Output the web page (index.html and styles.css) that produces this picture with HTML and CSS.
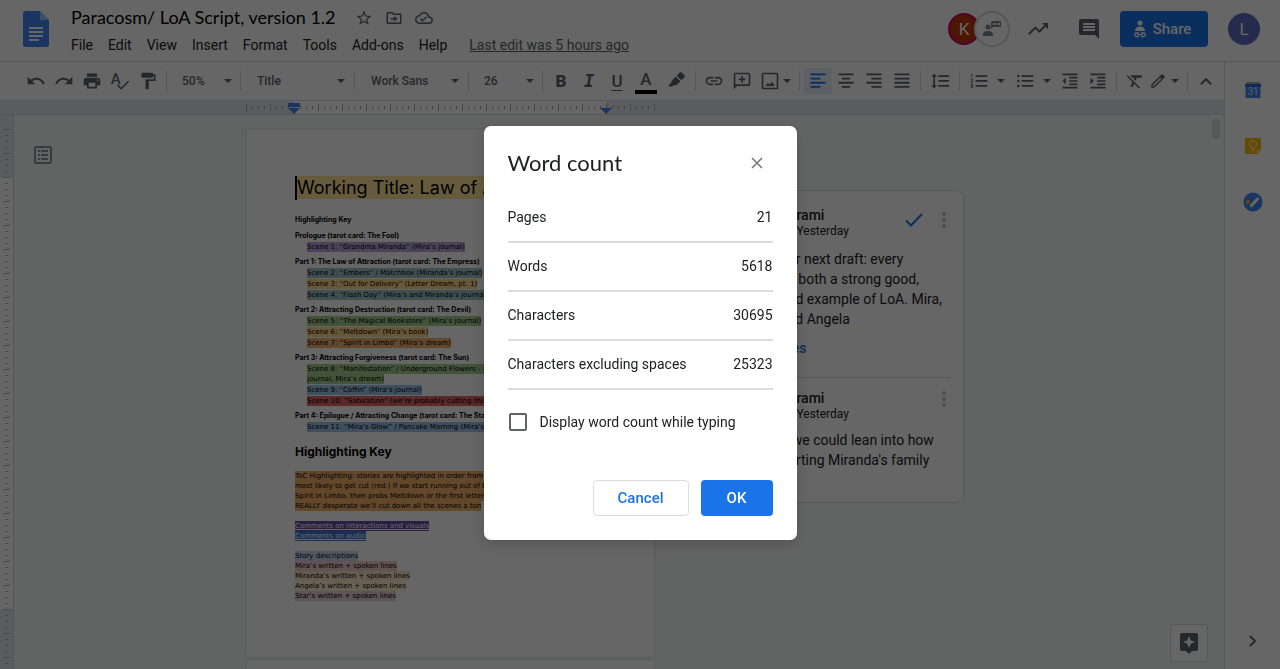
FILE: index.html
```html
<!DOCTYPE html>
<html lang="en">
<head>
    <meta charset="UTF-8">
    <meta name="viewport" content="width=device-width, initial-scale=1.0">
    <title>Paracosm/ LoA Script, version 1.2</title>
    <link rel="stylesheet" href="styles.css">
</head>
<body>
    <!-- Shared icons -->
    <svg class="sprite" aria-hidden="true">
        <symbol id="caret" viewBox="0 0 8 4"><path d="M0 0h8L4 4z"/></symbol>
        <symbol id="more" viewBox="0 0 4 16"><circle cx="2" cy="2" r="2"/><circle cx="2" cy="8" r="2"/><circle cx="2" cy="14" r="2"/></symbol>
    </svg>

    <header class="header">
        <svg class="logo" viewBox="0 0 26 36">
            <path fill="#4285f4" d="M2.500 0H17l9 9v24.500a2.500 2.500 0 0 1-2.500 2.500h-21A2.500 2.500 0 0 1 0 33.500v-31A2.500 2.500 0 0 1 2.500 0z"/>
            <path fill="#a1c2fa" d="M17 0l9 9h-9z"/>
            <path fill="#fff" d="M6 16h14v2H6zm0 4h14v2H6zm0 4h14v2H6zm0 4h10v2H6z"/>
        </svg>
        <div class="doc-info">
            <div class="title-row">
                <h1 class="doc-title">Paracosm/ LoA Script, version 1.2</h1>
                <button class="title-button" aria-label="Star"><svg viewBox="0 0 24 24"><path d="M22 9.240l-7.190-.62L12 2 9.190 8.630 2 9.240l5.460 4.730L5.820 21 12 17.270 18.180 21l-1.630-7.030L22 9.240zM12 15.400l-3.760 2.270 1-4.280-3.320-2.880 4.380-.38L12 6.100l1.710 4.040 4.380.38-3.320 2.880 1 4.280L12 15.400z"/></svg></button>
                <button class="title-button" aria-label="Move"><svg viewBox="0 0 24 24"><path d="M20 6h-8l-2-2H4c-1.100 0-2 .9-2 2v12c0 1.100.9 2 2 2h16c1.100 0 2-.9 2-2V8c0-1.100-.9-2-2-2zm0 12H4V6h5.200l2 2H20v10zm-7.500-1l4-4-4-4v3H8v2h4.500z"/></svg></button>
                <button class="title-button" aria-label="Document status"><svg viewBox="0 0 24 24"><path d="M19.350 10.040C18.670 6.590 15.640 4 12 4 9.110 4 6.600 5.640 5.350 8.040 2.340 8.360 0 10.910 0 14c0 3.310 2.690 6 6 6h13c2.760 0 5-2.240 5-5 0-2.640-2.050-4.780-4.650-4.960zM19 18H6c-2.210 0-4-1.790-4-4 0-2.050 1.530-3.760 3.560-3.970l1.070-.11.5-.95C8.080 7.140 9.940 6 12 6c2.620 0 4.880 1.860 5.390 4.430l.3 1.500 1.530.11c1.560.1 2.780 1.410 2.780 2.960 0 1.650-1.350 3-3 3zm-9-3.820l-2.090-2.090L6.500 13.500 10 17l6.010-6.010-1.410-1.410z"/></svg></button>
            </div>
            <nav class="menu">
                <button>File</button>
                <button>Edit</button>
                <button>View</button>
                <button>Insert</button>
                <button>Format</button>
                <button>Tools</button>
                <button>Add-ons</button>
                <button>Help</button>
                <a href="#" class="last-edit">Last edit was 5 hours ago</a>
            </nav>
        </div>
        <div class="header-right">
            <div class="viewers">
                <span class="avatar avatar-k">K</span>
                <button class="chat-button" aria-label="Show chat"><svg viewBox="0 0 20 16"><circle cx="6" cy="6" r="2.500"/><path d="M1 14c0-3 2-4 5-4s5 1 5 4v1H1zM10 0h9v6H11l-2 2V1z"/><path fill="#fff" d="M11 2h2v2h-2zm3 0h1v2h-1zm2 0h2v2h-2z"/></svg></button>
            </div>
            <button class="head-icon" aria-label="Activity dashboard"><svg viewBox="0 0 24 24"><path d="M16 6l2.290 2.290-4.880 4.880-4-4L2 16.590 3.410 18l6-6 4 4 6.300-6.290L22 12V6z"/></svg></button>
            <button class="head-icon comments-icon" aria-label="Comment history"><svg viewBox="0 0 24 24"><path d="M21.990 4c0-1.100-.89-2-1.990-2H4c-1.100 0-2 .9-2 2v12c0 1.100.9 2 2 2h14l4 4-.01-18zM18 14H6v-2h12v2zm0-3H6V9h12v2zm0-3H6V6h12v2z"/></svg></button>
            <button class="share"><svg viewBox="0 0 14 18"><circle cx="7" cy="3" r="2.500"/><path d="M2 11c0-3 2-4.500 5-4.500s5 1.500 5 4.500z"/><path fill="none" stroke="#fff" stroke-width="1.300" d="M6 13H3.500a1.700 1.700 0 0 0 0 3.500H6M8 13h2.500a1.700 1.700 0 0 1 0 3.500H8M4.500 14.700h5"/></svg>Share</button>
            <span class="avatar avatar-l">L</span>
        </div>
    </header>

    <div class="main">
        <div class="editor">
            <div class="toolbar">
                <button class="tool" aria-label="Undo"><svg viewBox="0 0 24 24"><path d="M12.500 8c-2.650 0-5.050.99-6.900 2.600L2 7v9h9l-3.620-3.620c1.390-1.160 3.160-1.880 5.120-1.880 3.540 0 6.550 2.310 7.600 5.500l2.370-.78C21.080 11.030 17.150 8 12.500 8z"/></svg></button>
                <button class="tool" aria-label="Redo"><svg viewBox="0 0 24 24"><path d="M18.400 10.600C16.550 8.990 14.150 8 11.500 8c-4.650 0-8.580 3.030-9.960 7.220L3.900 16c1.050-3.190 4.050-5.500 7.600-5.500 1.950 0 3.730.72 5.120 1.880L13 16h9V7l-3.600 3.600z"/></svg></button>
                <button class="tool" aria-label="Print"><svg viewBox="0 0 24 24"><path d="M19 8H5c-1.660 0-3 1.340-3 3v6h4v4h12v-4h4v-6c0-1.660-1.340-3-3-3zm-3 11H8v-5h8v5zm3-7c-.55 0-1-.45-1-1s.45-1 1-1 1 .45 1 1-.45 1-1 1zm-1-9H6v4h12V3z"/></svg></button>
                <button class="tool" aria-label="Spelling check"><svg viewBox="0 0 24 24"><text x="1" y="16" font-size="18" font-weight="500">A</text><path d="M21.590 11.590l-8.090 8.090L9.830 16l-1.410 1.410 5.090 5.090L23 13z"/></svg></button>
                <button class="tool" aria-label="Paint format"><svg viewBox="0 0 24 24"><path d="M18 4V3c0-.55-.45-1-1-1H5c-.55 0-1 .45-1 1v4c0 .55.45 1 1 1h12c.55 0 1-.45 1-1V6h1v4H9v11c0 .55.45 1 1 1h2c.55 0 1-.45 1-1v-9h8V4h-3z"/></svg></button>
                <span class="sep"></span>
                <div class="picker picker-small"><select aria-label="Zoom"><option>50%</option></select><svg class="caret"><use href="#caret"/></svg></div>
                <span class="sep"></span>
                <div class="picker"><select aria-label="Styles"><option>Title</option></select><svg class="caret"><use href="#caret"/></svg></div>
                <span class="sep"></span>
                <div class="picker"><select aria-label="Font"><option>Work Sans</option></select><svg class="caret"><use href="#caret"/></svg></div>
                <span class="sep"></span>
                <div class="picker picker-small"><select aria-label="Font size"><option>26</option></select><svg class="caret"><use href="#caret"/></svg></div>
                <span class="sep"></span>
                <button class="tool letter bold">B</button>
                <button class="tool letter italic">I</button>
                <button class="tool letter underline">U</button>
                <button class="tool wide letter text-color">A</button>
                <button class="tool wide" aria-label="Highlight color"><svg viewBox="0 0 24 24"><g transform="rotate(45 12 12)"><rect x="8" y="0" width="8" height="7" rx="1.500"/><path d="M8 8.500h8V15l-2.500 3v2L11 22.500h-1.500V18L8 15z"/></g></svg></button>
                <span class="sep"></span>
                <button class="tool" aria-label="Insert link"><svg viewBox="0 0 24 24"><path d="M3.900 12c0-1.710 1.390-3.100 3.100-3.100h4V7H7c-2.760 0-5 2.240-5 5s2.240 5 5 5h4v-1.900H7c-1.710 0-3.100-1.390-3.100-3.100zM8 13h8v-2H8v2zm9-6h-4v1.900h4c1.710 0 3.100 1.390 3.100 3.100s-1.390 3.100-3.100 3.100h-4V17h4c2.760 0 5-2.240 5-5s-2.240-5-5-5z"/></svg></button>
                <button class="tool" aria-label="Add comment"><svg viewBox="0 0 24 24"><path d="M2 4c0-1.100.9-2 2-2h16c1.100 0 2 .9 2 2v12c0 1.100-.9 2-2 2H6l-4 4V4zm2 12h16V4H4v12zm7-10h2v3h3v2h-3v3h-2v-3H8V9h3z"/></svg></button>
                <button class="tool split-image" aria-label="Insert image"><svg viewBox="0 0 24 24"><path d="M20 4v16H4V4h16m0-2H4c-1.100 0-2 .9-2 2v16c0 1.100.9 2 2 2h16c1.100 0 2-.9 2-2V4c0-1.100-.9-2-2-2zm-5.500 10.500l-3 4-2-2.500L6.500 18h11z"/></svg><svg class="caret"><use href="#caret"/></svg></button>
                <span class="sep"></span>
                <button class="tool selected" aria-label="Left align"><svg viewBox="0 0 24 24"><path d="M3 3h18v2.200H3zm0 5h12v2.200H3zm0 5h18v2.200H3zm0 5h12v2.200H3z"/></svg></button>
                <button class="tool" aria-label="Center align"><svg viewBox="0 0 24 24"><path d="M3 3h18v2.200H3zm4 5h10v2.200H7zm-4 5h18v2.200H3zm4 5h10v2.200H7z"/></svg></button>
                <button class="tool" aria-label="Right align"><svg viewBox="0 0 24 24"><path d="M3 3h18v2.200H3zm6 5h12v2.200H9zm-6 5h18v2.200H3zm6 5h12v2.200H9z"/></svg></button>
                <button class="tool" aria-label="Justify"><svg viewBox="0 0 24 24"><path d="M3 3h18v2.200H3zm0 5h18v2.200H3zm0 5h18v2.200H3zm0 5h18v2.200H3z"/></svg></button>
                <span class="sep"></span>
                <button class="tool wide" aria-label="Line spacing"><svg viewBox="0 0 24 24"><path d="M6 7h2.500L5 3 1.500 7H4v10H1.500L5 21l3.500-4H6V7zm4-2v2.200h13V5H10zm0 14h13v-2.200H10V19zm0-6h13v-2.200H10V13z"/></svg></button>
                <span class="sep"></span>
                <button class="tool split-list" aria-label="Numbered list"><svg viewBox="0 0 24 24"><path d="M2 17h2v.5H3v1h1v.5H2v1h3v-4H2v1zm1-9h1V4H2v1h1v3zm-1 3h1.800L2 13.100v.9h3v-1H3.200L5 10.900V10H2v1zm6-6v2.200h14V5H8zm0 14h14v-2.200H8V19zm0-6h14v-2.200H8V13z"/></svg><svg class="caret"><use href="#caret"/></svg></button>
                <button class="tool split-list" aria-label="Bulleted list"><svg viewBox="0 0 24 24"><path d="M4 10.500c-.83 0-1.500.67-1.500 1.500s.67 1.500 1.500 1.500 1.500-.67 1.500-1.500-.67-1.500-1.500-1.500zm0-6c-.83 0-1.500.67-1.500 1.500S3.170 7.500 4 7.500 5.500 6.830 5.500 6 4.830 4.500 4 4.500zm0 12c-.83 0-1.500.68-1.500 1.500s.68 1.500 1.500 1.500 1.500-.68 1.500-1.500-.67-1.500-1.500-1.500zM8 19h14v-2.200H8V19zm0-6h14v-2.200H8V13zm0-8v2.200h14V5H8z"/></svg><svg class="caret"><use href="#caret"/></svg></button>
                <button class="tool" aria-label="Decrease indent"><svg viewBox="0 0 24 24"><path d="M11 17h10v-2H11v2zm-8-5l4 4V8l-4 4zm0 9h18v-2H3v2zM3 3v2h18V3H3zm8 6h10V7H11v2zm0 4h10v-2H11v2z"/></svg></button>
                <button class="tool" aria-label="Increase indent"><svg viewBox="0 0 24 24"><path d="M3 21h18v-2H3v2zM3 8v8l4-4-4-4zm8 9h10v-2H11v2zM3 3v2h18V3H3zm8 6h10V7H11v2zm0 4h10v-2H11v2z"/></svg></button>
                <span class="sep"></span>
                <button class="tool" aria-label="Clear formatting"><svg viewBox="0 0 24 24"><path d="M3.270 5L2 6.270l6.970 6.970L6.500 19h3l1.570-3.660L16.730 21 18 19.730 3.550 5.270 3.270 5zM6 5v.18L8.820 8h2.400l-.72 1.680 2.100 2.100L14.210 8H20V5H6z"/></svg></button>
                <button class="tool split-mode" aria-label="Editing mode"><svg viewBox="0 0 24 24"><path d="M20.410 4.940l-1.350-1.350a2 2 0 0 0-2.830 0L3 16.820V21h4.180L20.410 7.770a2 2 0 0 0 0-2.830zM6.410 19.060L5 19v-1.360l9.820-9.820 1.410 1.410z"/></svg><svg class="caret"><use href="#caret"/></svg></button>
                <span class="sep"></span>
                <button class="tool" aria-label="Hide menus"><svg viewBox="0 0 24 24"><path d="M12 8l-7 7 1.700 1.700L12 11.400l5.300 5.300L19 15z"/></svg></button>
            </div>

            <div class="ruler">
                <div class="ruler-scale">
                    <svg class="marker marker-left" viewBox="0 0 12 11"><path d="M0 0h12v4H0zM0 5h12l-6 6z"/></svg>
                    <svg class="marker marker-right" viewBox="0 0 12 6"><path d="M0 0h12l-6 6z"/></svg>
                </div>
            </div>

            <div class="workspace">
                <div class="side-ruler"></div>
                <div class="canvas">
                    <div class="outline">
                        <button class="outline-button" aria-label="Show document outline"><svg viewBox="0 0 18 18"><path fill-rule="evenodd" d="M1.500 0h15L18 1.500v15L16.500 18h-15L0 16.500v-15zM2 2v14h14V2zM4 4h2v2H4zm3 0h7v2H7zM4 8h2v2H4zm3 0h7v2H7zm-3 4h2v2H4zm3 0h7v2H7z"/></svg></button>
                    </div>
                    <div class="pages">
                        <article class="page">
                            <h2 class="script-title"><mark class="yellow">Working Title: Law of Attraction</mark></h2>
                            <p class="part first">Highlighting Key</p>
                            <p class="part">Prologue (tarot card: The Fool)</p>
                            <ul>
                                <li><mark class="purple">Scene 1: “Grandma Miranda” (Mira’s journal)</mark></li>
                            </ul>
                            <p class="part">Part 1: The Law of Attraction (tarot card: The Empress)</p>
                            <ul>
                                <li><mark class="teal">Scene 2: “Embers” / Matchbox (Miranda’s journal)</mark></li>
                                <li><mark class="gold">Scene 3: “Out for Delivery” (Letter Dream, pt. 1)</mark></li>
                                <li><mark class="teal">Scene 4: “Flash Day” (Mira’s and Miranda’s journals)</mark></li>
                            </ul>
                            <p class="part">Part 2: Attracting Destruction (tarot card: The Devil)</p>
                            <ul>
                                <li><mark class="green">Scene 5: “The Magical Bookstore” (Mira’s journal)</mark></li>
                                <li><mark class="gold">Scene 6: “Meltdown” (Mira’s book)</mark></li>
                                <li><mark class="orange">Scene 7: “Spirit in Limbo” (Mira’s dream)</mark></li>
                            </ul>
                            <p class="part">Part 3: Attracting Forgiveness (tarot card: The Sun)</p>
                            <ul>
                                <li><mark class="green">Scene 8: “Manifestation” / Underground Flowers - (Mira’s<br>journal, Mira’s dream)</mark></li>
                                <li><mark class="blue">Scene 9: “Coffin” (Mira’s journal)</mark></li>
                                <li><mark class="red">Scene 10: “Saturation” (we’re probably cutting this)</mark></li>
                            </ul>
                            <p class="part">Part 4: Epilogue / Attracting Change (tarot card: The Star)</p>
                            <ul>
                                <li><mark class="blue">Scene 11: “Mira’s Glow” / Pancake Morning (Mira’s book)</mark></li>
                            </ul>
                            <h3 class="key-title">Highlighting Key</h3>
                            <p class="note"><mark class="orange">ToC Highlighting: stories are highlighted in order from<br>most likely to get cut (red.) If we start running out of time:<br>Spirit in Limbo, then probs Meltdown or the first letter<br>REALLY desperate we’ll cut down all the scenes a ton</mark></p>
                            <p class="note"><mark class="violet">Comments on interactions and visuals</mark><br><mark class="azure">Comments on audio</mark></p>
                            <p class="note"><mark class="sky">Story descriptions</mark><br><mark class="rose">Mira’s written + spoken lines</mark><br><mark class="peach">Miranda’s written + spoken lines</mark><br><mark class="cream">Angela’s written + spoken lines</mark><br><mark class="pink">Star’s written + spoken lines</mark></p>
                        </article>
                        <article class="page"></article>
                    </div>
                    <aside class="thread">
                        <section class="comment">
                            <div class="comment-head">
                                <div class="comment-by">
                                    <strong>Karami</strong>
                                    <span>on Yesterday</span>
                                </div>
                                <button class="resolve" aria-label="Mark as resolved"><svg viewBox="0 0 18 14"><path d="M1 7.500l5 5L17 1" fill="none" stroke="#1a73e8" stroke-width="2"/></svg></button>
                                <button class="more" aria-label="More options"><svg><use href="#more"/></svg></button>
                            </div>
                            <p>our next draft: every<br>as both a strong good,<br>bad example of LoA. Mira,<br>and Angela</p>
                            <a href="#" class="thread-link">files</a>
                        </section>
                        <section class="comment">
                            <div class="comment-head">
                                <div class="comment-by">
                                    <strong>Karami</strong>
                                    <span>on Yesterday</span>
                                </div>
                                <button class="more" aria-label="More options"><svg><use href="#more"/></svg></button>
                            </div>
                            <p>if we could lean into how<br>porting Miranda's family</p>
                        </section>
                    </aside>
                    <span class="scroll-thumb"></span>
                    <button class="explore" aria-label="Explore"><svg viewBox="0 0 18 21"><path fill-rule="evenodd" d="M2 0h14a2 2 0 0 1 2 2v14a2 2 0 0 1-2 2h-4l-3 3-3-3H2a2 2 0 0 1-2-2V2a2 2 0 0 1 2-2zm7 3L7.300 7.300 3 9l4.300 1.700L9 15l1.700-4.300L15 9l-4.300-1.700z"/></svg></button>
                </div>
            </div>
        </div>

        <aside class="side-panel">
            <button aria-label="Calendar"><svg viewBox="0 0 18 18"><path fill="#a8b2c0" d="M2 1h14v4H2z"/><path fill="#4285f4" d="M1 3h16l-.5 3v11h-15V6z"/><path fill="#2a66d9" d="M1 3h16l-.5 3h-15z"/><text x="9" y="14" text-anchor="middle" font-size="10" fill="#d2e3fc">31</text></svg></button>
            <button aria-label="Keep"><svg viewBox="0 0 18 18"><path fill="#fbbc04" d="M2 1h14a1 1 0 0 1 1 1v11l-4 4H2a1 1 0 0 1-1-1V2a1 1 0 0 1 1-1z"/><path fill="#fde293" d="M17 13h-4v4z"/><path fill="none" stroke="#fff" d="M7.500 11.500V10a3.500 3.500 0 1 1 3 0v1.500zM7.500 13.500h3"/></svg></button>
            <button aria-label="Tasks"><svg class="tasks" viewBox="0 0 20 20"><circle cx="10" cy="10" r="9.500" fill="#4285f4"/><circle cx="5" cy="10" r="2" fill="#fbbc04"/><path d="M8.500 13.500l6-6.500" stroke="#fff" stroke-width="3.200" stroke-linecap="round"/></svg></button>
            <button class="hide-panel" aria-label="Hide side panel"><svg viewBox="0 0 10 12"><path d="M2 1l5 5-5 5" fill="none" stroke="#5f6368" stroke-width="2"/></svg></button>
        </aside>
    </div>

    <!-- Word count dialog -->
    <div class="overlay">
        <div class="dialog" role="dialog" aria-modal="true" aria-labelledby="dialog-title">
            <div class="dialog-head">
                <h2 id="dialog-title">Word count</h2>
                <button class="close" aria-label="Close"><svg viewBox="0 0 12 12"><path d="M1 1l10 10M11 1L1 11"/></svg></button>
            </div>
            <table class="counts">
                <tr><th scope="row">Pages</th><td>21</td></tr>
                <tr><th scope="row">Words</th><td>5618</td></tr>
                <tr><th scope="row">Characters</th><td>30695</td></tr>
                <tr><th scope="row">Characters excluding spaces</th><td>25323</td></tr>
            </table>
            <div class="option">
                <input type="checkbox" id="show-count">
                <label for="show-count">Display word count while typing</label>
            </div>
            <div class="dialog-buttons">
                <button class="cancel">Cancel</button>
                <button class="ok">OK</button>
            </div>
        </div>
    </div>
</body>
</html>
```
FILE: styles.css
```css
* {
    box-sizing: border-box;
}

body {
    margin: 0;
    height: 100vh;
    display: flex;
    flex-direction: column;
    overflow: hidden;
    font-family: Roboto, Arial, sans-serif;
    font-size: 14px;
    color: #202124;
    background: #fff;
}

button {
    font-family: inherit;
    font-size: 14px;
    color: inherit;
    background: none;
    border: none;
    padding: 0;
    display: flex;
    align-items: center;
    justify-content: center;
    cursor: pointer;
}

svg {
    display: block;
    fill: #5f6368;
}

h1, h2, h3, p, ul {
    margin: 0;
    padding: 0;
}

.sprite {
    position: absolute;
    width: 0;
    height: 0;
}

/* Header */
.header {
    display: flex;
    flex: none;
    height: 62px;
    padding: 0 20px 0 23px;
    border-bottom: 1px solid #dadce0;
}

.logo {
    width: 26px;
    height: 36px;
    margin: 11px 22px 0 0;
}

.doc-info {
    padding-top: 4px;
}

.title-row {
    display: flex;
    align-items: center;
    height: 28px;
}

.doc-title {
    font-family: Lato, Roboto, sans-serif;
    font-size: 18px;
    font-weight: 400;
    line-height: 22px;
    color: #000;
    margin-right: 19px;
    padding-bottom: 2px;
    white-space: nowrap;
}

.title-button {
    margin-right: 12px;
}

.title-button svg {
    width: 18px;
    height: 18px;
}

.menu {
    display: flex;
    align-items: center;
    gap: 15px;
    height: 26px;
    white-space: nowrap;
}

.last-edit {
    margin-left: 7px;
    color: #5f6368;
}

.header-right {
    display: flex;
    align-items: center;
    height: 58px;
    margin-left: auto;
}

.viewers {
    display: flex;
    align-items: center;
}

.avatar {
    display: flex;
    align-items: center;
    justify-content: center;
    width: 32px;
    height: 32px;
    border-radius: 50%;
    color: #fff;
    font-size: 17px;
}

.avatar-k {
    background: #bf360c;
    border: 2px solid #d5006d;
    margin-right: -6px;
}

.avatar-l {
    background: #5c6bc0;
}

.chat-button {
    width: 36px;
    height: 36px;
    border: 2px solid #dadce0;
    border-radius: 50%;
    background: #fff;
}

.chat-button svg {
    width: 20px;
    height: 16px;
    fill: #80868b;
}

.head-icon {
    width: 24px;
    margin-left: 16px;
}

.head-icon svg {
    width: 24px;
    height: 24px;
}

.comments-icon {
    margin: 0 19px 0 27px;
}

.share {
    width: 88px;
    height: 36px;
    gap: 6px;
    padding-right: 4px;
    margin-right: 20px;
    border-radius: 4px;
    background: #1a73e8;
    color: #fff;
    font-size: 15px;
    font-weight: 500;
}

.share svg {
    width: 14px;
    height: 18px;
    fill: #fff;
}

/* Main area */
.main {
    display: flex;
    flex: 1;
    min-height: 0;
}

.editor {
    display: flex;
    flex-direction: column;
    flex: 1;
    min-width: 0;
}

.toolbar {
    display: flex;
    align-items: center;
    flex: none;
    height: 39px;
    padding-left: 22px;
    border-bottom: 1px solid #dadce0;
}

.tool {
    flex: none;
    width: 28px;
    height: 26px;
    border-radius: 2px;
}

.tool svg {
    width: 20px;
    height: 20px;
}

.tool.wide {
    width: 30px;
}

.tool .caret,
.caret {
    flex: none;
    width: 8px;
    height: 4px;
}

.selected {
    background: #e8f0fe;
}

.selected svg {
    fill: #1a73e8;
}

.split-image {
    width: 39px;
    gap: 3px;
}

.split-list {
    width: 46px;
    gap: 8px;
}

.split-mode {
    width: 34px;
    gap: 4px;
    justify-content: flex-start;
}

.tool.split-mode svg:first-child {
    width: 18px;
    height: 18px;
}

.sep {
    flex: none;
    width: 1px;
    height: 20px;
    margin: 0 4px;
    background: #dadce0;
}

.picker {
    display: flex;
    align-items: center;
    flex: none;
    width: 105px;
    padding: 0 5px 0 12px;
}

.picker-small {
    width: 65px;
    padding: 0 4px 0 11px;
}

.picker select {
    flex: 1;
    min-width: 0;
    appearance: none;
    padding: 0;
    border: none;
    background: none;
    font-family: inherit;
    font-size: 12px;
    font-weight: 500;
    color: #5f6368;
}

.letter {
    font-size: 17px;
    font-weight: 500;
    line-height: 18px;
    color: #5f6368;
}

.bold {
    font-weight: 900;
}

.italic {
    font-family: "DejaVu Sans Mono", monospace;
    font-style: italic;
    font-weight: 700;
}

.underline {
    text-decoration: underline;
    text-underline-offset: 3px;
}

.text-color {
    background: linear-gradient(#000, #000) center bottom / 22px 4px no-repeat;
    padding-bottom: 4px;
}

/* Rulers */
.ruler {
    flex: none;
    height: 14px;
    padding-left: 246px;
    background: #e4e7ec;
    border-bottom: 1px solid #d2d5da;
}

.ruler-scale {
    position: relative;
    width: 409px;
    height: 13px;
    background:
        repeating-linear-gradient(90deg, #a6a9ad 0 1px, transparent 1px 24px) 0 3px / 100% 7px no-repeat,
        repeating-linear-gradient(90deg, #a6a9ad 0 1px, transparent 1px 6px) 0 5px / 100% 3px no-repeat,
        linear-gradient(#fff, #fff) 48px 0 / 312px 100% no-repeat;
}

.marker {
    position: absolute;
    width: 12px;
    fill: #4285f4;
}

.marker-left {
    left: 42px;
    top: 2px;
    height: 11px;
}

.marker-right {
    left: 354px;
    top: 7px;
    height: 6px;
}

.workspace {
    display: flex;
    flex: 1;
    min-height: 0;
}

.side-ruler {
    flex: none;
    width: 14px;
    border-right: 1px solid #d2d5da;
    background:
        repeating-linear-gradient(#b4b7ba 0 1px, transparent 1px 24px) 3px 14px / 7px 100% no-repeat,
        repeating-linear-gradient(#b4b7ba 0 1px, transparent 1px 6px) 5px 14px / 3px 100% no-repeat,
        linear-gradient(#fff, #fff) 0 63px / 100% 431px no-repeat,
        #e4e7ec;
}

/* Document */
.canvas {
    position: relative;
    display: flex;
    align-items: flex-start;
    flex: 1;
    min-width: 0;
    overflow: hidden;
    background: #f6faf7;
}

.outline {
    flex: none;
    width: 232px;
    padding: 31px 20px;
}

.outline-button svg {
    width: 18px;
    height: 18px;
    fill: #8f9499;
}

.pages {
    flex: none;
    width: 409px;
    padding-top: 14px;
}

.page {
    height: 528px;
    padding: 46px 48px;
    margin-bottom: 3px;
    background: #fff;
    border: 1px solid #f1f3f4;
    box-shadow: 0 0 2px rgba(60, 64, 67, 0.2);
    overflow: hidden;
    font-family: "DejaVu Sans", sans-serif;
    font-size: 7px;
    line-height: 10px;
    color: #000;
    white-space: nowrap;
}

.page ul {
    list-style: none;
    padding-left: 12px;
}

.page li {
    margin-bottom: 1px;
}

.script-title,
.part,
.key-title {
    font-family: Inter, "Open Sans", sans-serif;
}

.script-title {
    font-size: 18px;
    font-weight: 400;
    line-height: 24px;
    border-left: 2px solid #000;
}

.part {
    margin: 5px 0 1px;
    font-weight: 700;
}

.part.first {
    margin: 15px 0 6px;
}

.key-title {
    margin: 12px 0 11px;
    font-size: 12px;
    line-height: 16px;
}

.note {
    margin-bottom: 10px;
}

mark {
    padding: 1px 0;
    color: inherit;
}

.yellow { background: #ffe599; }
.purple { background: #b4a7d6; }
.teal { background: #a2c4c9; }
.gold { background: #ffd98b; }
.green { background: #a5cf90; }
.orange { background: #f6b26b; }
.blue { background: #9fc5e8; }
.red { background: #e06666; }
.violet { background: #674ea7; color: #fff; text-decoration: underline; }
.azure { background: #3c78d8; color: #fff; text-decoration: underline; }
.sky { background: #c9daf8; }
.rose { background: #f4cccc; }
.peach { background: #fce5cd; }
.cream { background: #fff2cc; }
.pink { background: #ead1dc; }

/* Comments */
.thread {
    flex: none;
    width: 289px;
    margin: 75px 0 0 20px;
    padding: 0 12px 0 104px;
    border: 1px solid #dadce0;
    border-radius: 8px;
    background: #fff;
}

.comment {
    padding: 15px 0 19px;
    line-height: 20px;
    white-space: nowrap;
}

.comment + .comment {
    padding: 11px 0 32px;
    border-top: 1px solid #dadce0;
}

.comment-head {
    display: flex;
    align-items: flex-start;
    margin-bottom: 11px;
}

.comment + .comment .comment-head {
    margin-bottom: 9px;
}

.comment-by {
    flex: 1;
}

.comment-by strong,
.comment-by span {
    display: block;
    line-height: 18px;
    font-weight: 500;
}

.comment-by span {
    font-size: 12px;
    line-height: 14px;
    font-weight: 400;
}

.resolve {
    margin: 7px 19px 0 0;
}

.resolve svg {
    width: 18px;
    height: 14px;
}

.more {
    margin: 6px 5px 0 0;
}

.comment + .comment .more {
    margin-top: 2px;
}

.more svg {
    width: 4px;
    height: 16px;
    fill: #bdc1c6;
}

.thread-link {
    display: block;
    margin-top: 9px;
    color: #1a73e8;
    font-weight: 500;
    text-decoration: none;
}

/* Floating on the canvas */
.scroll-thumb {
    position: absolute;
    top: 4px;
    right: 4px;
    width: 8px;
    height: 20px;
    border-radius: 4px;
    background: #dadce0;
}

.explore {
    position: absolute;
    right: 16px;
    bottom: 7px;
    width: 38px;
    height: 38px;
    border: 1px solid #dadce0;
    border-radius: 2px;
    background: #fff;
}

.explore svg {
    width: 18px;
    height: 21px;
}

/* Side panel */
.side-panel {
    display: flex;
    flex-direction: column;
    align-items: center;
    gap: 36px;
    flex: none;
    width: 56px;
    padding: 18px 0;
    border-left: 1px solid #dadce0;
}

.side-panel button {
    width: 20px;
    height: 20px;
}

.side-panel svg {
    width: 18px;
    height: 18px;
}

.side-panel .tasks {
    width: 20px;
    height: 20px;
}

.side-panel .hide-panel {
    margin-top: auto;
}

.side-panel .hide-panel svg {
    width: 10px;
    height: 12px;
}

/* Dialog */
.overlay {
    position: fixed;
    inset: 0;
    z-index: 10;
    display: flex;
    align-items: center;
    justify-content: center;
    padding-bottom: 3px;
    background: rgba(0, 0, 0, 0.6);
}

.dialog {
    width: 313px;
    padding: 24px;
    border-radius: 7px;
    background: #fff;
    box-shadow: 0 4px 16px rgba(0, 0, 0, 0.2);
}

.dialog-head {
    display: flex;
    align-items: center;
    justify-content: space-between;
    height: 26px;
    margin-bottom: 18px;
    padding-right: 10px;
}

.dialog-head h2 {
    font-family: Lato, Roboto, sans-serif;
    font-size: 22px;
    font-weight: 400;
    line-height: 26px;
}

.close svg {
    width: 12px;
    height: 12px;
    stroke: #757575;
    stroke-width: 1.5;
}

.counts {
    width: 100%;
    border-collapse: collapse;
}

.counts th,
.counts td {
    padding: 13px 0 14px;
    border-bottom: 2px solid #dadce0;
    font-weight: 400;
    line-height: 20px;
    text-align: left;
}

.counts td {
    text-align: right;
}

.option {
    display: flex;
    align-items: center;
    gap: 13px;
    height: 20px;
    margin: 22px 0 48px;
}

.option input {
    appearance: none;
    width: 18px;
    height: 18px;
    margin: 0 0 0 1px;
    border: 2px solid #5f6368;
    border-radius: 2px;
}

.dialog-buttons {
    display: flex;
    justify-content: flex-end;
    gap: 12px;
}

.dialog-buttons button {
    min-width: 72px;
    height: 36px;
    padding: 0 24px;
    border-radius: 4px;
    font-size: 15px;
    font-weight: 500;
}

.dialog-buttons .cancel {
    border: 1px solid #dadce0;
    color: #1a73e8;
}

.dialog-buttons .ok {
    background: #1a73e8;
    color: #fff;
}
```
